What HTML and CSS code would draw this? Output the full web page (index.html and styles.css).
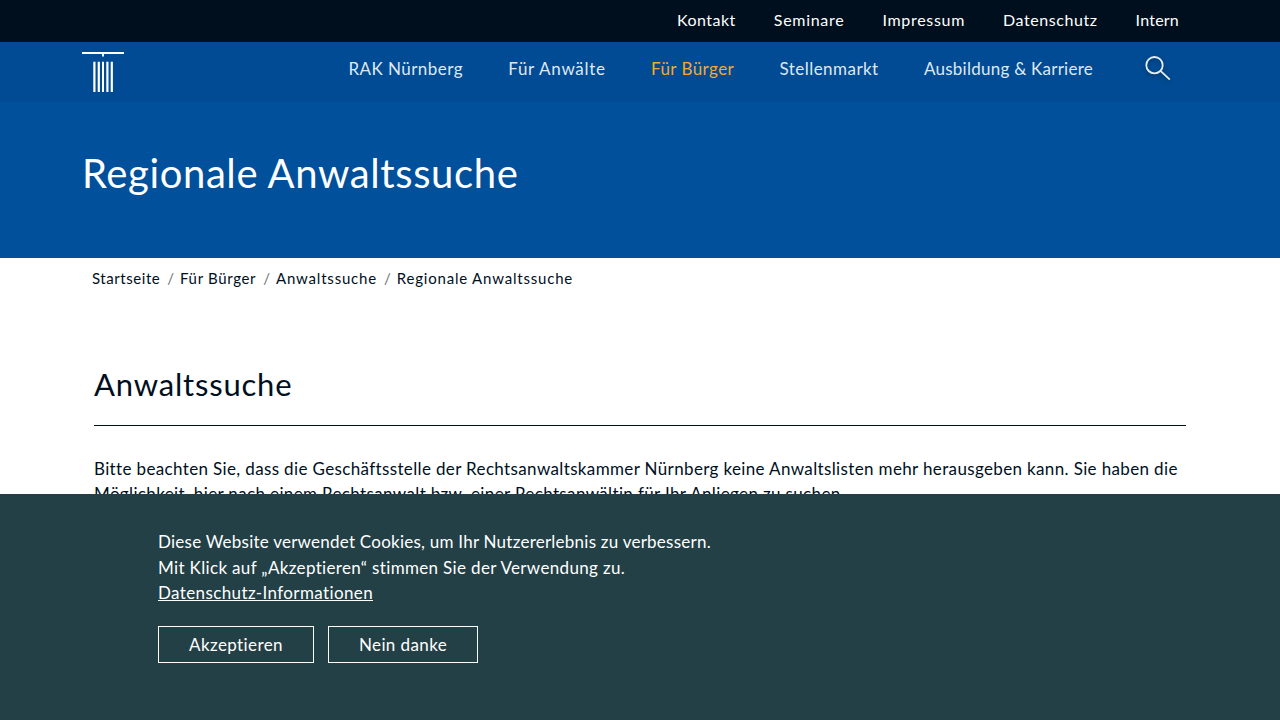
FILE: index.html
```
<!DOCTYPE html>
<html lang="de">
<head>
    <meta charset="UTF-8">
    <meta name="viewport" content="width=device-width, initial-scale=1.0">
    <title>Regionale Anwaltssuche</title>
    <link rel="stylesheet" href="styles.css">
</head>
<body>
    <header>
        <nav class="top-nav">
            <a href="#" class="kontakt">Kontakt</a>
            <a href="#" class="seminare">Seminare</a>
            <a href="#" class="impressum">Impressum</a>
            <a href="#" class="datenschutz">Datenschutz</a>
            <a href="#" class="intern">Intern</a>
        </nav>
        <div class="main-bar">
            <a href="#" class="logo" aria-label="Startseite">
                <svg width="42" height="40" viewBox="0 0 42 40" fill="#fff"><path d="M0 0h42v2H0zM20 2h2v2.6h-2zM11.3 9.7h2.2V40h-2.2zM15.7 9.7h2.2V40h-2.2zM20 9.7h2V40h-2zM24.3 9.7h2.2V40h-2.2zM28.7 9.7h2.2V40h-2.2z"/></svg>
            </a>
            <nav class="main-nav">
                <a href="#">RAK Nürnberg</a>
                <a href="#" class="anwaelte">Für Anwälte</a>
                <a href="#" class="active">Für Bürger</a>
                <a href="#">Stellenmarkt</a>
                <a href="#" class="karriere">Ausbildung &amp; Karriere</a>
            </nav>
            <a href="#" class="search" aria-label="Suche">
                <svg width="26" height="26" viewBox="0 0 26 26" fill="none" stroke="#e6edf5" stroke-width="1.8"><circle cx="9.5" cy="9.2" r="8.2"/><path d="M15.5 14.9L24.8 23.6"/></svg>
            </a>
        </div>
    </header>

    <section class="hero">
        <h1>Regionale Anwaltssuche</h1>
    </section>

    <ol class="breadcrumb">
        <li class="start"><a href="#">Startseite</a></li>
        <li class="buerger"><a href="#">Für Bürger</a></li>
        <li><a href="#">Anwaltssuche</a></li>
        <li><a href="#">Regionale Anwaltssuche</a></li>
    </ol>

    <main>
        <h2>Anwaltssuche</h2>
        <p>Bitte beachten Sie, dass die Geschäftsstelle der Rechtsanwaltskammer Nürnberg keine Anwaltslisten mehr herausgeben kann. Sie haben die<br>
        Möglichkeit, hier nach einem Rechtsanwalt bzw. einer Rechtsanwältin für Ihr Anliegen zu suchen.</p>
    </main>

    <div class="cookie-banner">
        <p><span class="intro">Diese Website verwendet Cookies, um Ihr Nutzererlebnis zu verbessern.</span><br>
        Mit Klick auf „Akzeptieren“ stimmen Sie der Verwendung zu.<br>
        <a href="#">Datenschutz-Informationen</a></p>
        <div class="buttons">
            <button class="accept">Akzeptieren</button>
            <button class="decline">Nein danke</button>
        </div>
    </div>
</body>
</html>
```
FILE: styles.css
```
* {
    box-sizing: border-box;
}
body {
    margin: 0;
    height: 720px;
    overflow: hidden;
    font-family: Lato, sans-serif;
    font-size: 17px;
    line-height: 25.5px;
    color: #000f1e;
    background-color: #fff;
}
a {
    color: inherit;
    text-decoration: none;
}
.top-nav {
    display: flex;
    justify-content: flex-end;
    gap: 38px;
    height: 42px;
    padding: 7px 101px 0 0;
    font-size: 16px;
    color: #fff;
    background-color: #000f1e;
}
.kontakt {
    letter-spacing: 0.5px;
}
.seminare,
.impressum {
    letter-spacing: 0.7px;
}
.datenschutz {
    letter-spacing: 0.57px;
}
.intern {
    letter-spacing: 0.22px;
}
.main-bar {
    display: flex;
    height: 60px;
    padding: 10px 82px 0;
    background-color: #004b93;
}
.logo svg,
.search svg {
    display: block;
}
.main-nav {
    display: flex;
    gap: 45.3px;
    margin-left: auto;
    padding-top: 4px;
    letter-spacing: 0.45px;
    color: #dfe8f1;
}
.main-nav .anwaelte {
    letter-spacing: 0.7px;
}
.main-nav .karriere {
    letter-spacing: 0.25px;
}
.main-nav .active {
    color: #f4a832;
}
.search {
    margin: 4px 27px 0 52px;
    filter: drop-shadow(0 2px 2px rgba(0, 0, 0, 0.3));
}
.hero {
    height: 156px;
    padding: 41px 82px 0;
    color: #fff;
    background-color: #00509c;
}
h1 {
    margin: 0;
    font-size: 40px;
    font-weight: 400;
    line-height: 60px;
    letter-spacing: 0.6px;
}
.breadcrumb {
    display: flex;
    margin: 0;
    padding: 8px 92px 0;
    font-size: 15px;
    letter-spacing: 0.8px;
    list-style: none;
}
.breadcrumb .start {
    letter-spacing: 0.55px;
}
.breadcrumb .buerger {
    letter-spacing: 0.67px;
}
.breadcrumb li + li::before {
    content: "/";
    padding: 0 6px 0 7px;
    letter-spacing: 0;
    color: #6c757d;
}
main {
    padding: 0 94px;
}
h2 {
    margin: 67px 0 30px;
    padding-bottom: 16px;
    border-bottom: 1px solid #000f1e;
    font-size: 31px;
    font-weight: 400;
    line-height: 50px;
    letter-spacing: 0.8px;
}
main p {
    margin: 0;
    letter-spacing: 0.36px;
    white-space: nowrap;
}
.cookie-banner {
    position: fixed;
    left: 0;
    right: 0;
    bottom: 0;
    height: 226px;
    padding: 35px 158px 0;
    letter-spacing: 0.34px;
    color: #fff;
    background-color: #234046;
}
.cookie-banner p {
    margin: 0 0 20px;
}
.cookie-banner .intro {
    letter-spacing: 0.24px;
}
.cookie-banner a {
    letter-spacing: 0.38px;
    text-decoration: underline;
}
.buttons {
    display: flex;
    gap: 14px;
}
button {
    height: 37px;
    padding: 2px 0 0;
    border: 1px solid #fff;
    font: inherit;
    letter-spacing: 0.4px;
    color: #fff;
    background: none;
}
.accept {
    width: 156px;
}
.decline {
    width: 150px;
}
```
